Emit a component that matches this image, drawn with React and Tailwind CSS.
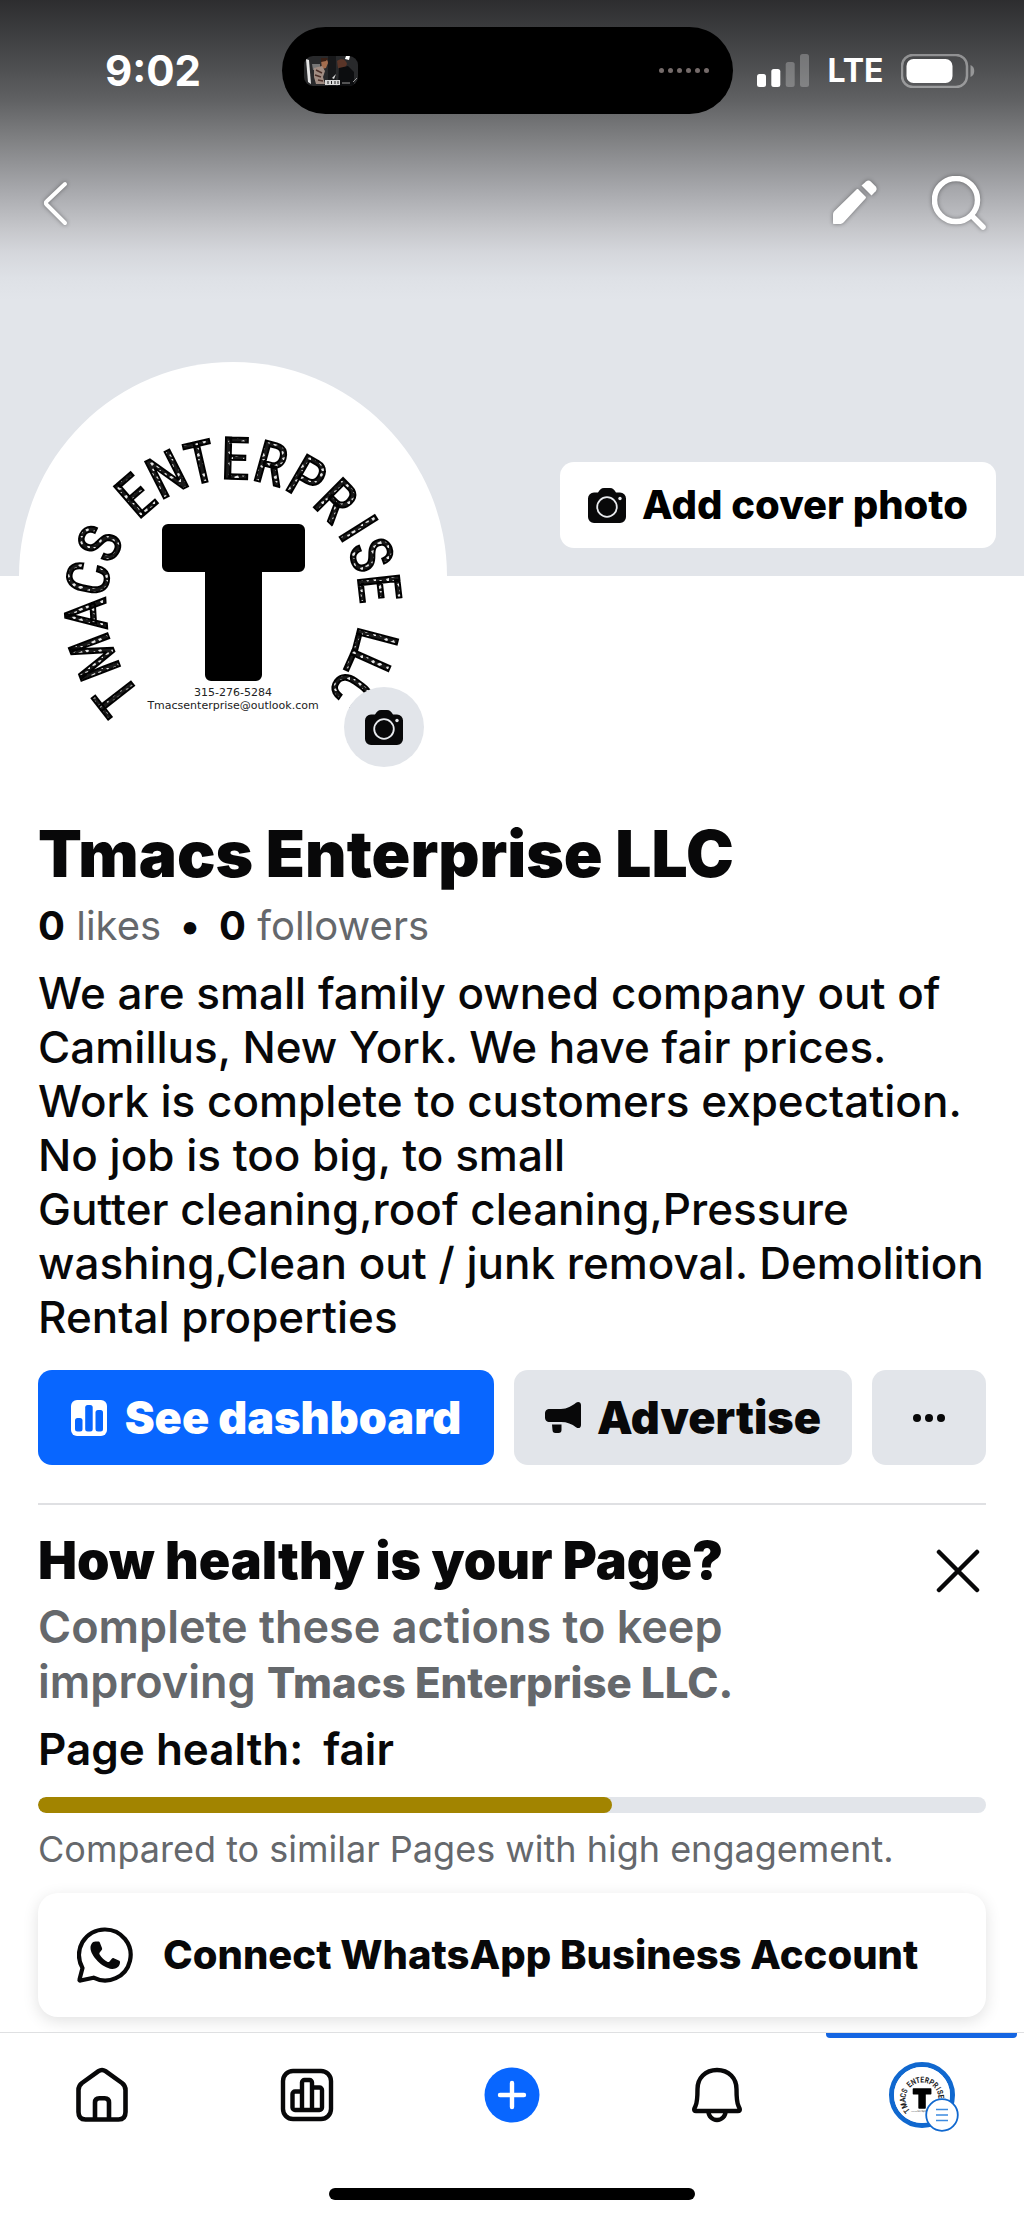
import { useState } from 'react';

const BIO = [
  'We are small family owned company out of Camillus, New York. We have fair prices. Work is complete to customers expectation. No job is too big, to small',
  'Gutter cleaning,roof cleaning,Pressure washing,Clean out / junk removal. Demolition Rental properties',
];

const HEALTH = 60.5;

// letter, angle on the ring, advance width in em
const RING = [
  [['T', -128, 0.5], ['M', -111, 0.68], ['A', -93.5, 0.55], ['C', -79, 0.59], ['S', -64.5, 0.55]],
  [
    ['E', -41, 0.55], ['N', -27, 0.59], ['T', -13, 0.5], ['E', 1.5, 0.55], ['R', 15.5, 0.59],
    ['P', 30, 0.55], ['R', 45, 0.59], ['I', 58, 0.23], ['S', 70, 0.55], ['E', 83.5, 0.55],
  ],
  [['L', 104.5, 0.46], ['L', 114, 0.46], ['C', 126, 0.59]],
];

const ringPoint = (angle, width, size) => {
  const a = (angle * Math.PI) / 180;
  const half = (width * size) / 2;
  return [
    214 + 127 * Math.sin(a) - half * Math.cos(a),
    244 - 127 * Math.cos(a) - half * Math.sin(a),
  ];
};

const Logo = ({ className, patternId }) => {
  const size = 58;

  return (
    <svg viewBox="0 0 428 428" className={className} role="img" aria-label="Tmacs Enterprise LLC logo">
      <defs>
        <pattern id={patternId} width="13" height="11" patternUnits="userSpaceOnUse">
          <rect width="13" height="11" fill="#1a1a1a" />
          <path d="M1 2l3-1 1 2-2 2zM7 5l4-2 1 3-3 1zM3 8l3-1v3H4zM9 9l3 0-1 2z" fill="#e5e5e5" />
        </pattern>
      </defs>
      <circle cx="214" cy="214" r="214" fill="#fff" />
      {RING.map((word) => {
        const letters = word.map((l) => l[0]).join('');
        const points = word.map(([, angle, width]) => ringPoint(angle, width, size));
        return (
          <text
            key={letters}
            x={points.map((p) => p[0]).join(' ')}
            y={points.map((p) => p[1]).join(' ')}
            rotate={word.map((l) => l[1]).join(' ')}
            fontSize={size}
            fontFamily="'Liberation Sans Narrow', 'Roboto Condensed', 'Liberation Sans', sans-serif"
            fill={`url(#${patternId})`}
            stroke="#000"
            strokeWidth="2"
          >
            {letters}
          </text>
        );
      })}
      <path
        d="M149 162h131a6 6 0 0 1 6 6v36a6 6 0 0 1-6 6h-37v103a6 6 0 0 1-6 6h-45a6 6 0 0 1-6-6V210h-37a6 6 0 0 1-6-6v-36a6 6 0 0 1 6-6z"
        fill="#000"
      />
      <text x="214" y="334" textAnchor="middle" fontSize="11" fontFamily="'DejaVu Sans', sans-serif" fill="#222">
        315-276-5284
      </text>
      <text x="214" y="347" textAnchor="middle" fontSize="11" fontFamily="'DejaVu Sans', sans-serif" fill="#222">
        Tmacsenterprise@outlook.com
      </text>
    </svg>
  );
};

const CameraIcon = () => (
  <svg viewBox="0 0 38 35" className="h-[35px] w-[38px] shrink-0" aria-hidden="true">
    <path
      d="M6 4.500h4C12 1.500 13 0 16 0h6c3 0 4 1.500 6 4.500h4a6 6 0 0 1 6 6V29a6 6 0 0 1-6 6H6a6 6 0 0 1-6-6V10.500a6 6 0 0 1 6-6z"
      fill="#080809"
    />
    <circle cx="19" cy="19" r="9.800" fill="none" stroke="#e9ebef" strokeWidth="1.800" />
    <circle cx="32" cy="10.500" r="1.700" fill="#e9ebef" />
  </svg>
);

const StatusBar = () => (
  <div className="grid grid-cols-[31fr_451px_32fr] items-center pt-[27px] text-white">
    <div className="flex justify-center pl-6 text-[42px] font-bold leading-[48px]">9:02</div>

    <div className="flex h-[87px] items-center justify-between rounded-full bg-black pl-[22px] pr-6">
      <svg viewBox="0 0 54 30" className="h-[30px] w-[54px]" aria-hidden="true">
        <defs>
          <clipPath id="thumb">
            <rect width="54" height="30" rx="9" />
          </clipPath>
        </defs>
        <g clipPath="url(#thumb)">
          <rect width="54" height="30" fill="#28292b" />
          <rect x="24" width="8" height="30" fill="#17181a" />
          <path d="M2 3l3 1 2 24-3-2z" fill="#e6e6e6" />
          <path d="M8 8h8v6H9z" fill="#777" />
          <path d="M17 4c3-3 7-1 7 3l-2 5-4 1z" fill="#a36d4e" />
          <path d="M17 2h7l-2 3-5 1z" fill="#3a1f14" />
          <path d="M10 12l8-2 3 5-2 6 2 7h-9l-2-7z" fill="#a08c82" />
          <path d="M12 14l6 3M11 19l6 2M14 24l5 1" stroke="#4b2f28" strokeWidth="1.500" />
          <path d="M33 5c4-3 9-2 10 3l-3 6-6-2z" fill="#5a3528" />
          <path d="M35 12l9-2 6 6v14H34z" fill="#0c0d0f" />
          <path d="M42 0h4l-1 4-4-1z" fill="#fff" />
          <path d="M28 22l4-4-2 5z" fill="#ddd" />
          <path d="M21 24h15v5H21z" fill="#d8d8d8" />
          <path d="M24 25v3M27.500 25v3M31 25v3M34 25v3" stroke="#222" strokeWidth="1" />
          <path d="M38 27h8M49 26l4-4" stroke="#999" />
        </g>
      </svg>
      <div className="flex gap-1">
        {[0, 1, 2, 3, 4, 5].map((i) => (
          <span key={i} className="size-[5px] rounded-full bg-[#756b6a]" />
        ))}
      </div>
    </div>

    <div className="flex items-center justify-center gap-[18px] pr-6">
      <svg viewBox="0 0 52 33" className="h-[33px] w-[52px]" aria-hidden="true">
        <rect y="20" width="9" height="13" rx="2.500" fill="#fff" />
        <rect x="14.300" y="15" width="9" height="18" rx="2.500" fill="#fff" />
        <rect x="28.700" y="8" width="9" height="25" rx="2.500" fill="#fff" opacity=".25" />
        <rect x="43" width="9" height="33" rx="2.500" fill="#fff" opacity=".25" />
      </svg>
      <span className="text-[32px] font-bold leading-10">LTE</span>
      <svg viewBox="0 0 74 34" className="h-[34px] w-[74px]" aria-hidden="true">
        <rect x="1" y="1" width="65" height="32" rx="11" fill="none" stroke="#fff" strokeOpacity=".4" strokeWidth="2.500" />
        <rect x="5.500" y="5" width="46" height="24" rx="7" fill="#fff" />
        <path d="M69.500 11c5 1.500 5 10.500 0 12z" fill="#fff" fillOpacity=".4" />
      </svg>
    </div>
  </div>
);

const Toolbar = () => (
  <div className="mt-[62px] flex items-center justify-between px-[38px] drop-shadow-[0_0_2px_rgba(0,0,0,0.4)]">
    <button type="button" aria-label="Back">
      <svg viewBox="0 0 32 54" className="h-[54px] w-8" fill="none" stroke="#fff" strokeWidth="4" strokeLinecap="round" strokeLinejoin="round">
        <path d="M27 8L8.500 25.500a2 2 0 0 0 0 3L27 47" />
      </svg>
    </button>
    <div className="flex items-center gap-[54px]">
      <button type="button" aria-label="Edit">
        <svg viewBox="0 0 46 54" className="h-[54px] w-[46px]" fill="#fff">
          <path d="M1 39c0-2 .5-3 2-4.500L24.500 13.500c.6-.6 1.400-.6 2 0l7 7c.6.6.6 1.400 0 2L12 46c-1.500 1.500-2.500 2-4.500 2H2c-.6 0-1-.4-1-1z" />
          <path d="M29.500 9.500L34 5.500c1.500-1.300 3.500-1.300 5 .2l4.500 4.500c1.500 1.500 1.500 3.500.2 5L39.500 19.500z" />
        </svg>
      </button>
      <button type="button" aria-label="Search">
        <svg viewBox="0 0 54 54" className="size-[54px]" fill="none" stroke="#fff" strokeLinecap="round">
          <circle cx="24" cy="24" r="21.500" strokeWidth="5.500" />
          <path d="M40 40l11 11" strokeWidth="5.500" />
        </svg>
      </button>
    </div>
  </div>
);

const PageHealth = ({ onClose }) => (
  <section className="mt-6 text-[#080809]">
    <div className="flex items-start justify-between">
      <div>
        <h2 className="text-[52px] font-black leading-[64px]">How healthy is your Page?</h2>
        <p className="mt-1.5 max-w-[760px] text-[45px] font-semibold leading-[55px] text-[#65686c]">
          Complete these actions to keep improving{' '}
          <strong className="text-[42px] font-extrabold leading-none">Tmacs Enterprise LLC.</strong>
        </p>
      </div>
      <button type="button" aria-label="Dismiss" onClick={onClose} className="mr-1.5 mt-5">
        <svg viewBox="0 0 44 44" className="size-11" fill="none" stroke="#080809" strokeWidth="4.500" strokeLinecap="round">
          <path d="M3 3l38 38M41 3L3 41" />
        </svg>
      </button>
    </div>

    <p className="mt-3 flex gap-5 text-[44px] font-semibold leading-[56px]">
      <span>Page health:</span>
      <span>fair</span>
    </p>
    <div className="mt-5 h-4 overflow-hidden rounded-full bg-[#e2e5ea]">
      <div className="h-full rounded-full bg-[#a28400]" style={{ width: `${HEALTH}%` }} />
    </div>
    <p className="mt-3 text-[36px] leading-[48px] text-[#65686c]">Compared to similar Pages with high engagement.</p>

    <a
      href="#whatsapp"
      className="mt-5 flex h-[124px] items-center gap-[30px] rounded-[20px] bg-white pl-[39px] text-[40px] font-extrabold shadow-[0_4px_16px_rgba(0,0,0,0.12)]"
    >
      <svg viewBox="0 0 56 56" className="size-14 shrink-0" aria-hidden="true">
        <path
          d="M28 2.500a25.500 25.500 0 1 1-11.500 48.200L3.500 53.500c-.8.200-1.200-.3-1-1L5.500 41A25.500 25.500 0 0 1 28 2.500z"
          fill="none"
          stroke="#080809"
          strokeWidth="4.200"
          strokeLinejoin="round"
        />
        <path
          d="M18.500 14.500h2.500c1 0 1.700.5 2 1.400l2 5c.3.800.2 1.500-.3 2.200l-2 2.500c-.5.600-.5 1.200-.1 1.900 2 3.400 4.500 5.700 8.100 7.400.7.300 1.300.2 1.800-.4l2.300-2.800c.5-.7 1.200-.8 2-.5l5 2.400c.9.400 1.300 1 1.200 2-.2 4.600-4.400 6.700-8 6.400C25 41 13.500 28.500 13.500 21c0-3 1.500-6.500 5-6.500z"
          fill="#080809"
        />
      </svg>
      Connect WhatsApp Business Account
    </a>
  </section>
);

const TabBar = () => (
  <nav className="relative border-t border-[#dfe0e2] bg-white">
    <div className="grid h-[124px] grid-cols-5">
      <a href="#home" aria-label="Home" className="flex items-center justify-center">
        <svg viewBox="0 0 54 56" className="h-14 w-[54px]" fill="none" stroke="#080809" strokeWidth="4.600" strokeLinejoin="round">
          <path d="M3.500 23c0-3 1-5 3.500-7L23.500 4.200c2.300-1.600 4.700-1.600 7 0L47 16c2.500 2 3.500 4 3.500 7v22c0 5-2 7.500-7 7.500h-33c-5 0-7-2.500-7-7.500z" />
          <path d="M20 52V35.500c0-3 1.300-4.300 4.300-4.300h5.400c3 0 4.300 1.300 4.300 4.300V52" />
        </svg>
      </a>
      <a href="#dashboard" aria-label="Professional dashboard" className="flex items-center justify-center">
        <svg viewBox="0 0 54 54" className="size-[54px]" fill="none" stroke="#080809" strokeWidth="4.400" strokeLinejoin="round">
          <rect x="3" y="3" width="48" height="48" rx="10" />
          <path d="M21.500 23.500H15a2.500 2.500 0 0 0-2.500 2.500v13.500A2.500 2.500 0 0 0 15 42h24.500a2.500 2.500 0 0 0 2.500-2.500V22a2.500 2.500 0 0 0-2.500-2.500H33" />
          <path d="M22 42V14.500a2.500 2.500 0 0 1 2.500-2.500h5a2.500 2.500 0 0 1 2.500 2.500V42" />
        </svg>
      </a>
      <a href="#create" aria-label="Create" className="flex items-center justify-center">
        <svg viewBox="0 0 56 56" className="size-14" aria-hidden="true">
          <circle cx="28" cy="28" r="27.500" fill="#0866ff" />
          <path d="M28 16v24M16 28h24" stroke="#fff" strokeWidth="4.400" strokeLinecap="round" />
        </svg>
      </a>
      <a href="#notifications" aria-label="Notifications" className="flex items-center justify-center">
        <svg viewBox="0 0 52 56" className="h-14 w-[52px]" fill="none" stroke="#080809" strokeWidth="4.400" strokeLinejoin="round">
          <path d="M26 3C14 3 6.500 11.500 6.500 22c0 9 0 13-2 17-1 2-1.300 3-1.300 3.500 0 1 .6 1.500 1.800 1.500h42c1.200 0 1.800-.5 1.800-1.500 0-.5-.3-1.500-1.300-3.500-2-4-2-8-2-17C45.500 11.500 38 3 26 3z" />
          <path d="M17.500 44.500a8.500 8.500 0 0 0 17 0" />
        </svg>
      </a>
      <a href="#profile" aria-label="Profile" className="relative flex items-center justify-center">
        <span className="absolute inset-x-[7px] top-0 h-[5px] rounded-b bg-[#1566e2]" />
        <span className="relative">
          <span className="block size-[66px] rounded-full border-[5px] border-[#1068cf] bg-white">
            <Logo className="size-full" patternId="ring-small" />
          </span>
          <svg viewBox="0 0 34 34" className="absolute -bottom-1 -right-1 size-[34px]" aria-hidden="true">
            <circle cx="17" cy="17" r="15.800" fill="#fff" stroke="#1068cf" strokeWidth="1.800" />
            <path d="M11 11.500h12M11 17h12M11 22.500h12" stroke="#3d8be0" strokeWidth="1.500" />
          </svg>
        </span>
      </a>
    </div>
    <div className="flex h-[62px] justify-center pt-[31px]">
      <div className="h-3 w-[366px] rounded-full bg-black" />
    </div>
  </nav>
);

const App = () => {
  const [showHealth, setShowHealth] = useState(true);

  return (
    <div className="bg-white font-['Inter',sans-serif] text-[#080809]">
      {/* Cover */}
      <header className="flex h-[576px] flex-col bg-[#e2e5ea] bg-[linear-gradient(to_bottom,#2d2d2f_0px,#4a4b4d_60px,#606163_100px,#808183_140px,#a7a8ac_190px,#c5c6ca_228px,#d5d7dc_253px,#dee1e6_278px,#e2e5ea_300px)]">
        <StatusBar />
        <Toolbar />
        <div className="mb-7 mr-7 mt-auto flex justify-end">
          <button type="button" className="flex h-[86px] items-center gap-4 rounded-[14px] bg-white px-7 text-[40px] font-extrabold text-black">
            <CameraIcon />
            Add cover photo
          </button>
        </div>
      </header>

      <main className="flow-root px-[38px] pb-[15px]">
        {/* Avatar */}
        <div className="relative -ml-[19px] -mt-[214px] size-[428px]">
          <Logo className="size-full" patternId="ring-large" />
          <button
            type="button"
            aria-label="Change profile picture"
            className="absolute bottom-[23px] right-[23px] flex size-20 items-center justify-center rounded-full bg-[#e2e5ea]"
          >
            <CameraIcon />
          </button>
        </div>

        {/* Page info */}
        <h1 className="mt-7 text-[64px] font-black leading-[72px]">Tmacs Enterprise LLC</h1>
        <p className="mt-2 flex items-center text-[40px] leading-[56px] text-[#65686c]">
          <a href="#likes">
            <strong className="text-[#080809]">0</strong> likes
          </a>
          <span className="w-[58px] text-center text-[#080809]">•</span>
          <a href="#followers">
            <strong className="text-[#080809]">0</strong> followers
          </a>
        </p>
        <div className="mt-3 text-[44px] font-medium leading-[54px]">
          {BIO.map((line) => (
            <p key={line}>{line}</p>
          ))}
        </div>

        {/* Actions */}
        <div className="mt-[26px] flex h-[95px] gap-5 text-[45px] font-black">
          <button type="button" className="flex grow items-center justify-center gap-[18px] rounded-[14px] bg-[#0866ff] text-white">
            <svg viewBox="0 0 36 36" className="size-9" aria-hidden="true">
              <rect width="36" height="36" rx="6" fill="#fff" />
              <rect x="4" y="18" width="7.500" height="13.500" rx="2.500" fill="#0866ff" />
              <rect x="14.200" y="5" width="7.500" height="26.500" rx="2.500" fill="#0866ff" />
              <rect x="24.500" y="10" width="7.500" height="21.500" rx="2.500" fill="#0866ff" />
            </svg>
            See dashboard
          </button>
          <button type="button" className="flex w-[338px] items-center justify-center gap-4 rounded-[14px] bg-[#e2e5ea]">
            <svg viewBox="0 0 36 32" className="h-8 w-9" fill="#080809" aria-hidden="true">
              <path d="M5 7h11c6 0 11-3 15-6.200C33.500-.8 36 .5 36 3v20c0 3-2.500 4-5 2.200C27 22 22 20 16 20H5c-3.500 0-5-1.500-5-5v-3c0-3.500 1.500-5 5-5z" />
              <path d="M7 22.500h9.500V28c0 2-1 3-3 3h-3c-2 0-3-1-3-3z" />
            </svg>
            Advertise
          </button>
          <button type="button" aria-label="More" className="flex w-[114px] items-center justify-center rounded-[14px] bg-[#e2e5ea]">
            <svg viewBox="0 0 32 8" className="h-2 w-8" fill="#080809">
              <circle cx="4" cy="4" r="4" />
              <circle cx="16" cy="4" r="4" />
              <circle cx="28" cy="4" r="4" />
            </svg>
          </button>
        </div>

        <hr className="mt-[38px] border-t-2 border-[#dfe0e3]" />

        {showHealth && <PageHealth onClose={() => setShowHealth(false)} />}
      </main>

      <TabBar />
    </div>
  );
};

export default App;
